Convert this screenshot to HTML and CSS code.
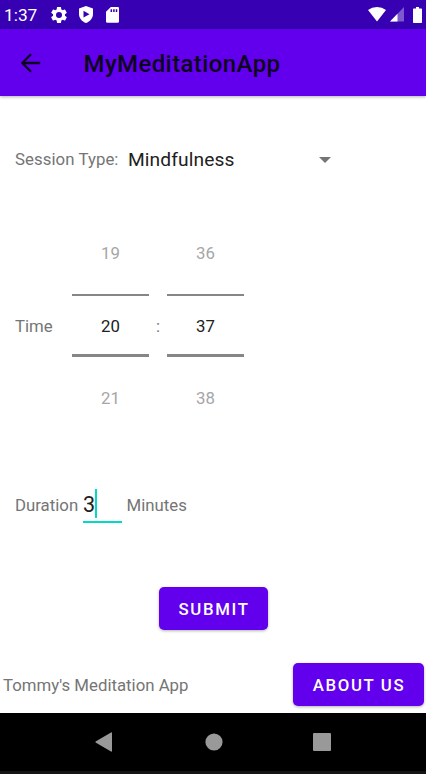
FILE: index.html
```html
<!DOCTYPE html>
<html lang="en">
<head>
<meta charset="utf-8">
<title>MyMeditationApp</title>
<link rel="stylesheet" href="styles.css">
</head>
<body>
<div class="phone">
  <header class="status">
    <span class="clock">1:37</span>
    <svg class="gear" width="20" height="20" viewBox="0 0 24 24"><path d="M19.14 12.94c.04-.3.06-.61.06-.94s-.02-.64-.07-.94l2.03-1.58c.18-.14.23-.41.12-.61l-1.92-3.32c-.12-.22-.37-.29-.59-.22l-2.39.96c-.5-.38-1.03-.7-1.62-.94l-.36-2.54c-.04-.24-.24-.41-.48-.41h-3.84c-.24 0-.43.17-.47.41l-.36 2.54c-.59.24-1.13.57-1.62.94l-2.39-.96c-.22-.08-.47 0-.59.22L2.74 8.87c-.12.21-.08.47.12.61l2.03 1.58c-.05.3-.09.63-.09.94s.02.64.07.94l-2.03 1.58c-.18.14-.23.41-.12.61l1.92 3.32c.12.22.37.29.59.22l2.39-.96c.5.38 1.03.7 1.62.94l.36 2.54c.05.24.24.41.48.41h3.84c.24 0 .44-.17.47-.41l.36-2.54c.59-.24 1.13-.56 1.62-.94l2.39.96c.22.08.47 0 .59-.22l1.92-3.32c.12-.22.07-.47-.12-.61l-2.01-1.58zM12 15.6A3.6 3.6 0 1 1 12 8.4a3.6 3.6 0 0 1 0 7.200z"/></svg>
    <svg class="shield" width="14" height="17" viewBox="0 0 14 17"><path fill-rule="evenodd" d="M7 0l7 2.600v5.400c0 4.200-3 7.600-7 9-4-1.400-7-4.800-7-9V2.600zM4.500 4.800v6.800l6-3.400z"/></svg>
    <svg class="sd" width="13" height="16" viewBox="0 0 12 16" preserveAspectRatio="none"><path fill-rule="evenodd" d="M4.500 0H11a1 1 0 0 1 1 1v13.500a1.300 1.300 0 0 1-1.300 1.300H1.300A1.300 1.300 0 0 1 0 14.500V4.700zM4.200 2.200v2.800h1.400V2.200zM6.600 2.200v2.800H8V2.200zM9 2.200v2.800h1.400V2.200z"/></svg>
    <span class="grow"></span>
    <svg class="wifi" width="18" height="15" viewBox="0 0 18 15"><path d="M0 2.900Q4 0 9 0t9 2.900L9 14.500z"/></svg>
    <svg class="signal" width="14" height="15" viewBox="0 0 14 15"><path opacity=".35" d="M14 0v14.500H0z"/><path d="M7.500 6.700v7.800H0z"/></svg>
    <svg class="battery" width="9" height="16" viewBox="0 0 9 16"><path d="M3 0h3v1.600h2.300q.7 0 .7.700v13q0 .7-.7.700H.7q-.7 0-.7-.7v-13q0-.7.700-.7H3z"/></svg>
  </header>
  <div class="toolbar">
    <svg class="back" width="20" height="20" viewBox="0 0 20 20"><path d="M19.200 10H1.800M10 1.200L1.300 10l8.700 8.800"/></svg>
    <h1 class="title">MyMeditationApp</h1>
  </div>
  <main class="content">
    <div class="session">
      <span class="session-label">Session Type:</span>
      <span class="session-value">Mindfulness</span>
      <svg width="12" height="6" viewBox="0 0 12 6"><path d="M0 0h12L6 6z"/></svg>
    </div>
    <div class="time">
      <span class="time-label">Time</span>
      <div class="picker"><span class="near">19</span><span class="current">20</span><span class="near">21</span></div>
      <span class="colon">:</span>
      <div class="picker"><span class="near">36</span><span class="current">37</span><span class="near">38</span></div>
    </div>
    <div class="duration">
      <span class="duration-label">Duration</span>
      <div class="field"><span>3</span><i class="caret"></i></div>
      <span class="minutes">Minutes</span>
    </div>
    <button class="button submit">SUBMIT</button>
    <div class="footer">
      <span class="brand">Tommy's Meditation App</span>
      <button class="button about">ABOUT US</button>
    </div>
  </main>
  <nav class="nav">
    <svg class="nav-back" width="18" height="20" viewBox="0 0 18 20"><path d="M16 .5q1-.5 1 .7v17.600q0 1.200-1 .7L1 10.700q-1.200-.7 0-1.400z"/></svg>
    <svg class="nav-home" width="18" height="18" viewBox="0 0 18 18"><circle cx="9" cy="9" r="8.600"/></svg>
    <svg class="nav-recent" width="18" height="18" viewBox="0 0 18 18"><rect width="18" height="18" rx="1"/></svg>
  </nav>
</div>
</body>
</html>
```
FILE: styles.css
```css
* { box-sizing: border-box; }
body { margin: 0; }
svg { display: block; flex: none; }
.phone {
  width: 426px;
  height: 774px;
  display: flex;
  flex-direction: column;
  overflow: hidden;
  background: #fff;
  color: #757575;
  font: 16.8px/20px Roboto, sans-serif;
  white-space: nowrap;
}
.status {
  height: 29px;
  display: flex;
  align-items: center;
  padding: 0 4px;
  background: #3700b3;
  color: #fff;
  fill: #fff;
}
.clock { width: 45px; font-size: 17.300px; }
.shield { margin-left: 10px; }
.sd { margin-left: 13px; }
.grow { flex: 1; }
.signal { margin-left: 4px; }
.battery { margin-left: 9px; }
.toolbar {
  height: 67px;
  flex: none;
  display: flex;
  align-items: center;
  padding-left: 21px;
  background: #6200ee;
  box-shadow: 0 1px 3px rgba(0, 0, 0, .3);
}
.back { fill: none; stroke: #0d0020; stroke-width: 2.300; }
.title {
  margin: 2px 0 0 42.500px;
  font-size: 24px;
  line-height: 30px;
  font-weight: 500;
  letter-spacing: .4px;
  color: #0d0020;
}
.content { height: 617px; display: flex; flex-direction: column; }
.session {
  height: 40px;
  margin-top: 43px;
  padding-left: 15px;
  display: flex;
  align-items: center;
  fill: #757575;
}
.session svg { margin-top: 2px; }
.session-label { width: 113px; letter-spacing: .06px; }
.session-value { width: 191px; padding-top: 1px; font-size: 19.200px; letter-spacing: .1px; color: #212121; }
.time {
  height: 216px;
  margin-top: 39px;
  padding-left: 15px;
  display: flex;
  align-items: center;
}
.time-label { width: 57px; }
.picker { width: 77px; display: flex; flex-direction: column; text-align: center; }
.near { height: 77px; line-height: 73px; color: #a6a6a6; }
.near:first-child { height: 76px; line-height: 71px; }
.near:last-child { height: 77px; line-height: 83px; }
.current {
  height: 63px;
  border-top: 2px solid #868686;
  border-bottom: 3px solid #868686;
  line-height: 60px;
  color: #212121;
}
.colon { width: 18px; text-align: center; }
.duration {
  height: 36px;
  margin-top: 53px;
  padding-left: 15px;
  display: flex;
  align-items: center;
}
.duration-label { width: 68px; }
.field {
  width: 39px;
  height: 36px;
  display: flex;
  align-items: flex-start;
  border-bottom: 2px solid #03dac5;
  color: #212121;
  font-size: 21.600px;
  line-height: 36px;
}
.caret { width: 2px; height: 29px; margin-top: 2px; background: #03dac5; }
.minutes { margin-left: 4.500px; }
.button {
  height: 43px;
  flex: none;
  border: 0;
  border-radius: 5px;
  padding: 1px 0 0 1px;
  background: #6200ee;
  box-shadow: 0 1px 3px rgba(0, 0, 0, .3);
  color: #fff;
  font: 500 16.800px/20px Roboto, sans-serif;
  letter-spacing: 1.650px;
}
.submit { width: 109px; margin: 64px 0 0 159px; }
.about { width: 131px; }
.footer {
  margin-top: 33px;
  padding: 0 2px 0 3px;
  display: flex;
  justify-content: space-between;
  align-items: center;
}
.nav {
  height: 61px;
  display: flex;
  align-items: center;
  padding: 0 95px 1px;
  border-bottom: 3px solid #141414;
  background: #000;
  fill: #999;
}
.nav-home { margin-left: 91.500px; }
.nav-recent { margin-left: 90px; }
```
